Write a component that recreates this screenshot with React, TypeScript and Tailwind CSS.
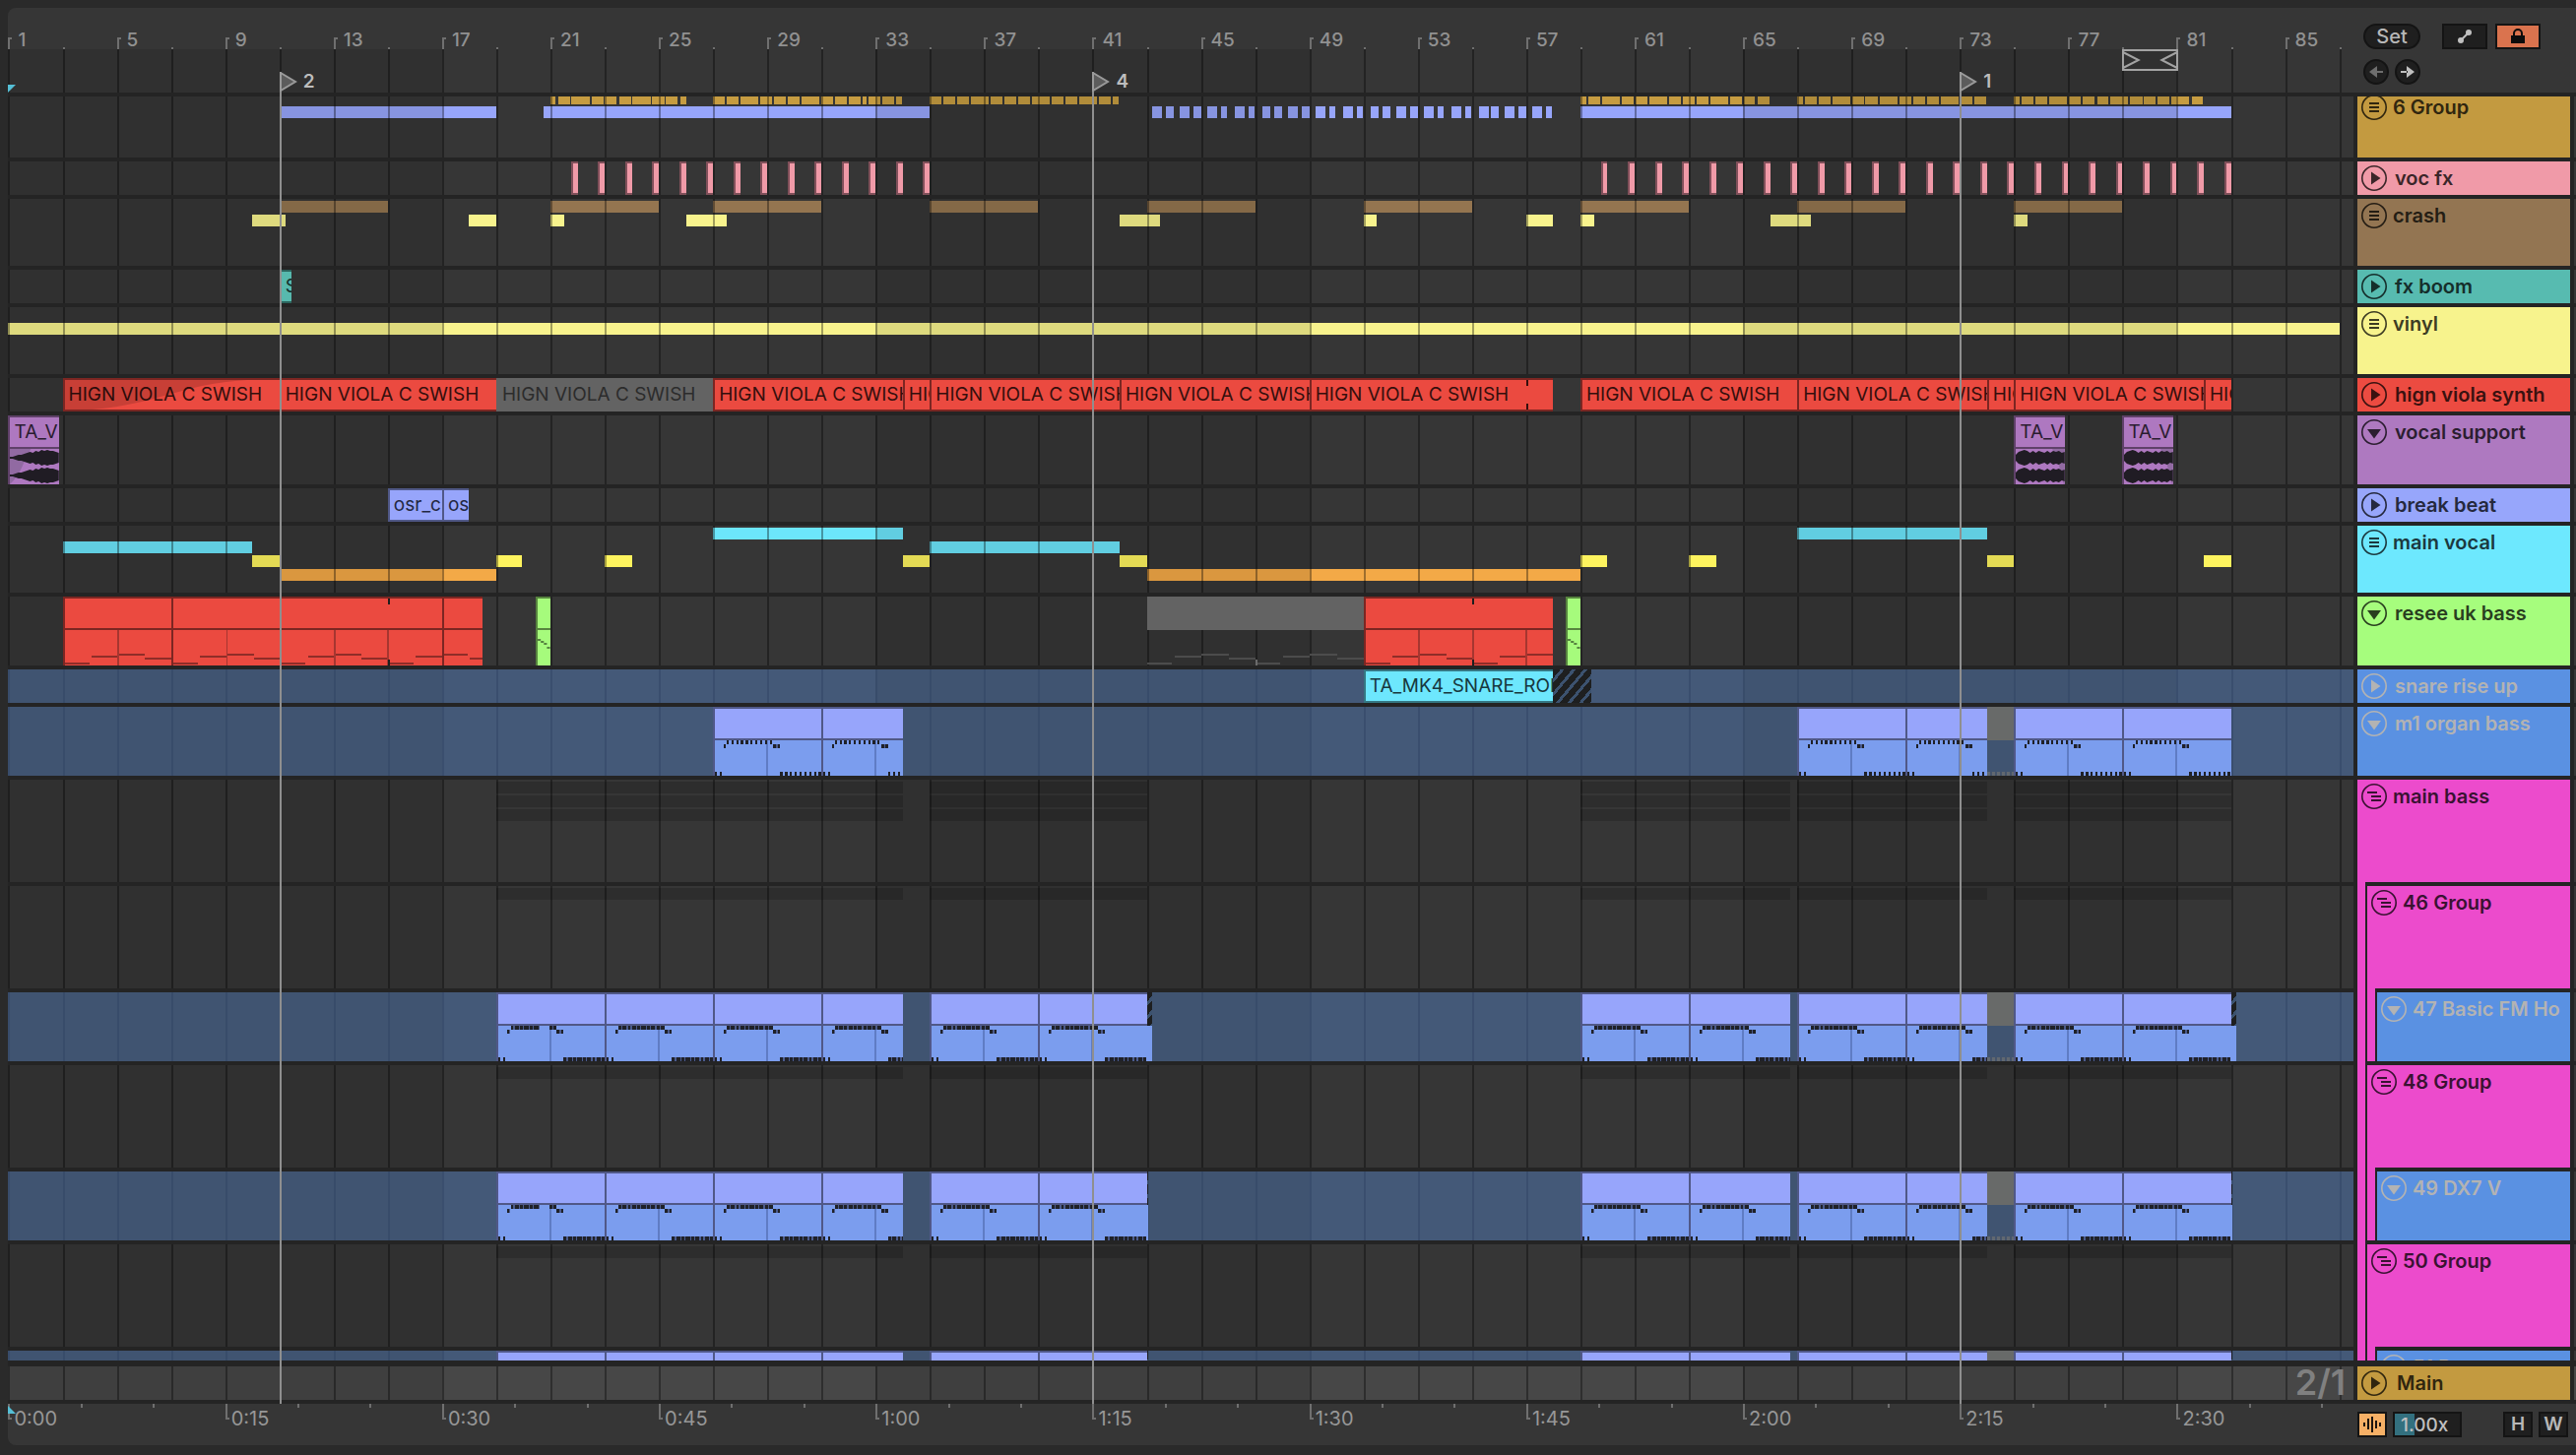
import type { ReactNode } from "react"

const TOTAL_BARS = 86.54
const LEAD_IN = 0.018

type Span = [start: number, end: number]

const left = (bar: number) => `${((bar - 1 + LEAD_IN) / TOTAL_BARS) * 100}%`
const width = (bars: number) => `${(bars / TOTAL_BARS) * 100}%`
const place = (start: number, end: number) => ({ left: left(start), width: width(end - start) })

function shift(offset: number, spans: Span[]): Span[] {
  return spans.map(([s, e]) => [s + offset, e + offset])
}

const gridBars = Array.from({ length: 44 }, (_, i) => 1 + i * 2)
const shadedBars: Span[] = [[1, 17], [33, 49], [65, 81]]

// ---------- lane background ----------

function Shade({ soft }: { soft?: boolean }) {
  return (
    <>
      {shadedBars.map(([s, e]) => (
        <div key={s} className={`absolute inset-y-0 ${soft ? "bg-black/5" : "bg-black/10"}`} style={place(s, e)} />
      ))}
    </>
  )
}

function Grid({ soft }: { soft?: boolean }) {
  return (
    <>
      {gridBars.map((bar) => (
        <div
          key={bar}
          className={`absolute inset-y-0 w-0.5 ${soft ? "bg-[#2f4464]/50" : "bg-black/35"}`}
          style={{ left: left(bar) }}
        />
      ))}
    </>
  )
}

// ---------- group overview strips ----------

const stripTop = ["top-0.5", "top-4", "top-[30px]", "top-11"]

function Strips({ row, color, spans }: { row: number; color: string; spans: Span[] }) {
  return (
    <>
      {spans.map(([s, e]) => (
        <div key={s} className={`absolute h-3 ${stripTop[row]} ${color}`} style={place(s, e)} />
      ))}
    </>
  )
}

const drums: Span[] = [
  ...shift(21, [[0, 0.2], [0.28, 0.72], [0.78, 1.45], [1.51, 1.95], [2.01, 2.45], [2.53, 2.97], [3.03, 3.7], [3.76, 4.2], [4.26, 4.7], [4.78, 5]]),
  ...shift(27, [[0, 0.44], [0.5, 0.94], [1, 1.67], [1.73, 2.17], [2.25, 2.69], [2.76, 3.2], [3.26, 3.92], [3.99, 4.43], [4.5, 4.93], [5, 5.45], [5.5, 5.66], [5.74, 6.18], [6.24, 6.68], [6.75, 6.97]]),
  ...shift(35, [[0, 0.42], [0.5, 0.94], [1, 1.44], [1.5, 2.17], [2.24, 2.68], [2.76, 3.2], [3.26, 3.7], [3.78, 4.43], [4.5, 4.93], [5, 5.45], [5.5, 6.16], [6.24, 6.68], [6.75, 6.97]]),
  ...shift(59, [[0, 0.21], [0.28, 0.73], [0.79, 1.44], [1.52, 1.96], [2.02, 2.46], [2.54, 3.19], [3.26, 3.7], [3.77, 4.22], [4.28, 4.72], [4.78, 5.45], [5.51, 5.95], [6.03, 6.45], [6.53, 6.97]]),
  ...shift(67, [[0, 0.21], [0.27, 0.73], [0.79, 1.23], [1.29, 1.96], [2.02, 2.46], [2.52, 2.96], [3.04, 3.69], [3.76, 4.2], [4.28, 4.71], [4.78, 5.22], [5.3, 5.95], [6.03, 6.45], [6.52, 6.97]]),
  ...shift(75, [[0, 0.22], [0.28, 0.72], [0.8, 1.24], [1.3, 1.96], [2.04, 2.47], [2.54, 2.98], [3.06, 3.48], [3.56, 4.21], [4.29, 4.73], [4.8, 5.23], [5.3, 5.74], [5.8, 6.47], [6.55, 6.97]]),
]

const chops = shift(43, [
  [0.21, 0.57], [0.71, 1], [1.22, 1.59], [1.73, 2.02],
  [2.24, 2.6], [2.75, 2.97], [3.26, 3.62], [3.77, 3.98],
  [4.27, 4.56], [4.71, 5], [5.22, 5.58], [5.73, 6.02],
  [6.23, 6.6], [6.74, 6.96], [7.25, 7.62], [7.76, 7.98],
  [8.27, 8.56], [8.7, 9], [9.21, 9.58], [9.72, 10.01],
  [10.23, 10.59], [10.74, 10.96], [11.25, 11.61], [11.76, 11.97],
  [12.26, 12.63], [12.7, 12.99], [13.21, 13.57], [13.72, 14.01],
  [14.22, 14.59], [14.73, 14.95],
])

const bassRegions: Span[] = [[19, 34], [35, 43], [59, 66.75], [67, 74], [75, 83]]

function Ghosts({ rows }: { rows: number[] }) {
  return (
    <>
      {rows.map((r) => (
        <Strips key={r} row={r} color="bg-black/15" spans={bassRegions} />
      ))}
    </>
  )
}

// ---------- clips ----------

const palette = {
  red: "bg-[#eb4a40] border-[#7c2622] text-[#350f0d]",
  pink: "bg-[#f09aa8] border-[#81505a] text-black",
  teal: "bg-[#57b9ae] border-[#2c655e] text-[#132e2b]",
  purple: "bg-[#ae78c0] border-[#5f4169] text-[#2a1c2f]",
  blue: "bg-[#97a5fb] border-[#505887] text-[#232842]",
  cyan: "bg-[#6de7fd] border-[#357783] text-[#17383e]",
  green: "bg-[#a6fb7c] border-[#57843f] text-black",
}

function Clip({ at, color, name }: { at: Span; color: keyof typeof palette; name?: string }) {
  return (
    <div
      className={`absolute inset-y-0 overflow-hidden whitespace-nowrap border-y-2 border-l-2 pl-1 text-[19px] leading-[30px] ${palette[color]}`}
      style={place(...at)}
    >
      {name}
    </div>
  )
}

function MutedClip({ at, name }: { at: Span; name?: string }) {
  return (
    <div
      className="absolute top-0 h-[34px] overflow-hidden whitespace-nowrap bg-[#636363] pl-1.5 text-[19px] leading-[34px] text-[#2c2c2c]"
      style={place(...at)}
    >
      {name}
    </div>
  )
}

function OpenClip({ at, color, body, name, children }: {
  at: Span
  color: keyof typeof palette
  body?: string
  name?: string
  children?: ReactNode
}) {
  return (
    <div
      className={`absolute inset-y-0 flex flex-col overflow-hidden border-l-2 border-t-2 ${palette[color]}`}
      style={place(...at)}
    >
      <div className="h-8 shrink-0 border-b-2 border-inherit pl-1 text-[19px] leading-[30px]">{name}</div>
      <div className={`h-9 shrink-0 ${body ?? ""}`}>{children}</div>
    </div>
  )
}

function Hatch({ at }: { at: Span }) {
  return (
    <div
      className="absolute top-0 h-[34px] bg-[repeating-linear-gradient(130deg,#1e1f20_0_6px,#3c526f_6px_9px)]"
      style={place(...at)}
    />
  )
}

const viola: Span[] = [[3, 11], [11, 19], [27, 34], [34, 35], [35, 42], [42, 49], [49, 58], [59, 67], [67, 74], [74, 75], [75, 82], [82, 83]]
const vocFx = [
  ...Array.from({ length: 14 }, (_, i) => 21.75 + i),
  ...Array.from({ length: 24 }, (_, i) => 59.75 + i),
]

const bassNoteY = [33, 26, 24, 28]

function BassNotes({ at: [start, end], color, lines }: { at: Span; color: string; lines?: string }) {
  const len = end - start
  const steps = Array.from({ length: Math.ceil(len) }, (_, i) => i)
  return (
    <svg className="block h-9 w-full" viewBox={`0 0 ${len} 36`} preserveAspectRatio="none" shapeRendering="crispEdges">
      {steps.map((i) => (
        <rect key={i} x={i} y={bassNoteY[(start + i - 3) % 4]} width={i % 4 === 0 ? 0.92 : 1} height="2" fill={color} />
      ))}
      {lines && steps.filter((i) => i > 0 && i % 2 === 0).map((i) => (
        <rect key={i} x={i - 0.04} y="0" width="0.07" height="36" fill={lines} />
      ))}
    </svg>
  )
}

function RiffRun({ from, to, y, dense }: { from: number; to: number; y: number; dense?: boolean }) {
  return (
    <>
      {dense && <line x1={from} x2={to} y1={y} y2={y} stroke="#4b5b8d" strokeWidth="4" />}
      <line x1={from} x2={to} y1={y} y2={y} stroke="#1f2128" strokeWidth="4" strokeDasharray={dense ? "0.1 0.05 0.16 0.05" : "0.08 0.1"} />
    </>
  )
}

function Riff({ len, dense, broken }: { len: number; dense?: boolean; broken?: boolean }) {
  return (
    <svg className="block h-9 w-full" viewBox={`0 0 ${len} 36`} preserveAspectRatio="none" shapeRendering="crispEdges">
      <rect x="1.94" y="0" width="0.07" height="36" fill="#5f7cc4" />
      {broken ? (
        <>
          <RiffRun from={0.47} to={1.55} y={2} dense={dense} />
          <RiffRun from={1.92} to={2.2} y={2} dense={dense} />
        </>
      ) : (
        <RiffRun from={0.44} to={2.2} y={2} dense={dense} />
      )}
      <RiffRun from={0.32} to={0.46} y={6} dense={dense} />
      <RiffRun from={2.2} to={2.44} y={6} dense />
      <RiffRun from={0} to={0.3} y={34} />
      <RiffRun from={2.46} to={4} y={34} dense={dense} />
    </svg>
  )
}

function RiffClips({ spans, dense, brokenAt }: { spans: Span[]; dense?: boolean; brokenAt?: number }) {
  return (
    <>
      {spans.map((at) => (
        <OpenClip key={at[0]} at={at} color="blue" body="bg-[#7b9dee]">
          <Riff len={at[1] - at[0]} dense={dense} broken={at[0] === brokenAt} />
        </OpenClip>
      ))}
    </>
  )
}

const organClips: Span[] = [[27, 31], [31, 34], [67, 71], [71, 74], [75, 79], [79, 83]]
const synthClips: Span[] = [
  [19, 23], [23, 27], [27, 31], [31, 34], [35, 39], [39, 43],
  [59, 63], [63, 66.75], [67, 71], [71, 74], [75, 79], [79, 83],
]

function GapClip() {
  return (
    <>
      <div className="absolute top-0 h-[34px] bg-[#686a69]" style={place(74, 75)} />
      <div className="absolute bottom-0 h-1 bg-[repeating-linear-gradient(90deg,#616870_0_3px,#45546b_3px_5px)]" style={place(74, 75)} />
    </>
  )
}

function SynthLane({ tail }: { tail: number }) {
  return (
    <>
      <RiffClips spans={synthClips} dense brokenAt={19} />
      <GapClip />
      {[43, 83].map((bar) => (
        <div key={bar}>
          <Hatch at={[bar, bar + tail]} />
          <div className="absolute bottom-0 h-9 bg-[#7b9dee]" style={place(bar, bar + tail)} />
        </div>
      ))}
    </>
  )
}

function Waveform({ fadeIn }: { fadeIn?: boolean }) {
  const amps = fadeIn
    ? [1, 1, 2, 3, 3, 4, 5, 6, 5, 7, 6, 8, 7, 8, 7, 7, 6, 5]
    : [3, 6, 7, 8, 7, 5, 7, 5, 7, 6, 5, 7, 5, 7, 6, 7, 5, 6]
  const shape = (mid: number) => {
    const top = amps.map((a, i) => `${i * 3},${mid - a}`)
    const bottom = amps.map((a, i) => `${i * 3},${mid + a}`).reverse()
    return [...top, ...bottom].join(" ")
  }
  return (
    <svg className="block h-9 w-full" viewBox="0 0 51 36" preserveAspectRatio="none">
      {fadeIn ? (
        <path d="M0 0 H22 C14 12 12 26 0 36 Z" fill="#916aa2" />
      ) : (
        <path d="M51 0 V36 H50 C46 20 44 10 38 0 Z" fill="#916aa2" />
      )}
      <polygon points={shape(9)} fill="#201c24" />
      <polygon points={shape(27)} fill="#201c24" />
    </svg>
  )
}

function Mark({ bar, className }: { bar: number; className: string }) {
  return <div className={`absolute w-0.5 ${className}`} style={{ left: left(bar) }} />
}

// ---------- track headers ----------

type Icon = "group" | "open-group" | "play" | "fold"

function TrackIcon({ icon }: { icon: Icon }) {
  return (
    <svg className="size-[26px]" viewBox="0 0 26 26" fill="none" stroke="currentColor">
      <circle cx="13" cy="13" r="12.2" strokeWidth="1.6" />
      {icon === "group" && <path d="M8 9h10M8 13h10M8 17h10" strokeWidth="2" />}
      {icon === "open-group" && <path d="M6 9h10M10 13h10M10 17h10" strokeWidth="1.8" />}
      {icon === "play" && <path d="M10 6.5 L19.5 13 L10 19.5Z" fill="currentColor" stroke="none" />}
      {icon === "fold" && <path d="M6 10 H20 L13 19.5Z" fill="currentColor" stroke="none" />}
    </svg>
  )
}

type Track = {
  name: string
  icon: Icon
  color: string
  height: string
  selected?: boolean
  rails?: string[]
  openBelow?: boolean
  strips?: ReactNode
  clips?: ReactNode
}

function TrackHeader({ track }: { track: Track }) {
  const wide = !track.rails && (track.icon === "play" || track.icon === "fold")
  return (
    <div className="flex w-[216px] shrink-0">
      {track.rails?.map((rail, i) => (
        <div key={i} className={`mr-0.5 w-2 shrink-0 bg-[#ec4bcc] ${rail}`} />
      ))}
      <div className="min-w-0 flex-1">
        <div className={`flex items-start overflow-hidden p-1 ${track.height} ${track.color}`}>
          <button type="button" aria-label={`Toggle ${track.name}`} className="shrink-0">
            <TrackIcon icon={track.icon} />
          </button>
          <span className={`whitespace-nowrap text-[20px] font-semibold leading-[26px] ${wide ? "ml-2" : "ml-1.5"}`}>
            {track.name}
          </span>
        </div>
        <div className={`h-1 w-2 ${track.openBelow ? "bg-[#ec4bcc]" : ""}`} />
      </div>
    </div>
  )
}

function TrackRow({ track }: { track: Track }) {
  return (
    <div className="flex shrink-0 gap-1">
      <div className={`relative min-w-0 flex-1 overflow-hidden ${track.height} ${track.selected ? "bg-[#445978]" : "bg-[#363636]"}`}>
        {track.strips}
        <Shade soft={track.selected} />
        <Grid soft={track.selected} />
        {track.clips}
      </div>
      <TrackHeader track={track} />
      <div className="mb-1 w-0.5 shrink-0 bg-[#363636]" />
    </div>
  )
}

const magenta = "bg-[#ec4bcc] text-[#3a1232]"
const selectedBlue = "bg-[#5a91e2] text-[#b3b3b3]"

const tracks: Track[] = [
  {
    name: "6 Group", icon: "group", color: "bg-[#c39a40] text-[#30260f]", height: "h-[68px]",
    strips: (
      <>
        <Strips row={0} color="bg-[#c69c41]" spans={drums} />
        <Strips row={1} color="bg-[#97a5fb]" spans={[[11, 19], [20.75, 35], ...chops, [59, 83]]} />
      </>
    ),
  },
  {
    name: "voc fx", icon: "play", color: "bg-[#f09aa8] text-[#3b2629]", height: "h-[34px]",
    clips: vocFx.map((bar) => <Clip key={bar} at={[bar, bar + 0.25]} color="pink" />),
  },
  {
    name: "crash", icon: "group", color: "bg-[#937552] text-[#241d14]", height: "h-[68px]",
    strips: (
      <>
        <Strips row={0} color="bg-[#947550]" spans={[11, 21, 27, 35, 43, 51, 59, 67, 75].map((b): Span => [b, b + 4])} />
        <Strips
          row={1}
          color="bg-[#f8f38d]"
          spans={[[10, 11.24], [18, 19], [21, 21.5], [26, 27.5], [42, 43.5], [51, 51.5], [57, 58], [59, 59.5], [66, 67.5], [75, 75.5]]}
        />
      </>
    ),
  },
  {
    name: "fx boom", icon: "play", color: "bg-[#57bbb0] text-[#152e2b]", height: "h-[34px]",
    clips: <Clip at={[11, 11.46]} color="teal" name="S" />,
  },
  {
    name: "vinyl", icon: "group", color: "bg-[#f7f38d] text-[#3d3c23]", height: "h-[68px]",
    strips: <Strips row={1} color="bg-[#f8f38d]" spans={[[1, 87]]} />,
  },
  {
    name: "hign viola synth", icon: "play", color: "bg-[#ec4b41] text-[#3a1210]", height: "h-[34px]",
    clips: (
      <>
        {viola.map((at) => <Clip key={at[0]} at={at} color="red" name="HIGN VIOLA C SWISH" />)}
        <svg className="absolute inset-y-0 h-[34px] py-0.5" style={place(3, 9.8)} viewBox="0 0 188 30" preserveAspectRatio="none">
          <path d="M2 0 H188 C120 4 100 24 30 30 H2Z" fill="#000" opacity="0.15" />
        </svg>
        <MutedClip at={[19, 27]} name="HIGN VIOLA C SWISH" />
        <Mark bar={57} className="bottom-0.5 h-1.5 bg-[#350f0d]" />
        <Mark bar={57} className="top-0.5 h-1.5 bg-[#350f0d]" />
      </>
    ),
  },
  {
    name: "vocal support", icon: "fold", color: "bg-[#ae79c0] text-[#2b1e30]", height: "h-[70px]",
    clips: (
      <>
        <OpenClip at={[1, 2.88]} color="purple" name="TA_V"><Waveform fadeIn /></OpenClip>
        <OpenClip at={[75, 76.88]} color="purple" name="TA_V"><Waveform /></OpenClip>
        <OpenClip at={[79, 80.88]} color="purple" name="TA_V"><Waveform /></OpenClip>
      </>
    ),
  },
  {
    name: "break beat", icon: "play", color: "bg-[#97a6fb] text-[#25293e]", height: "h-[34px]",
    clips: (
      <>
        <Clip at={[15, 17]} color="blue" name="osr_c" />
        <Clip at={[17, 18]} color="blue" name="os" />
      </>
    ),
  },
  {
    name: "main vocal", icon: "group", color: "bg-[#6de8fe] text-[#1b393f]", height: "h-[68px]",
    strips: (
      <>
        <Strips row={0} color="bg-[#6ce6fb]" spans={[[27, 34], [67, 74]]} />
        <Strips row={1} color="bg-[#6ce6fb]" spans={[[3, 10], [35, 42]]} />
        <Strips row={2} color="bg-[#fdf35e]" spans={[[10, 11], [19, 19.96], [23, 24], [34, 35], [42, 43], [59, 60], [63, 64], [74, 75], [82, 83]]} />
        <Strips row={3} color="bg-[#f3a947]" spans={[[11, 19], [43, 59]]} />
      </>
    ),
  },
  {
    name: "resee uk bass", icon: "fold", color: "bg-[#a6fd7d] text-[#293e1f]", height: "h-[70px]",
    clips: (
      <>
        {([[3, 7], [7, 17], [17, 18.5], [51, 58]] as Span[]).map((at) => (
          <OpenClip key={at[0]} at={at} color="red">
            <BassNotes at={at} color="#8f2d28" lines="#a63630" />
          </OpenClip>
        ))}
        <MutedClip at={[43, 51]} />
        <div className="absolute bottom-0 h-9" style={place(43, 51)}>
          <BassNotes at={[43, 51]} color="#4c4c4c" />
        </div>
        {([[20.47, 21], [58.47, 59]] as Span[]).map((at) => (
          <OpenClip key={at[0]} at={at} color="green">
            <svg className="block h-9 w-full" viewBox="0 0 12 36" preserveAspectRatio="none">
              <path d="M0 10h3M3 12h3M6 14h3M9 18h3" stroke="#578440" strokeWidth="2" />
            </svg>
          </OpenClip>
        ))}
        <Mark bar={15} className="top-0.5 h-1.5 bg-[#1e1e1e]" />
        <Mark bar={15} className="bottom-0 h-1.5 bg-[#1e1e1e]" />
        <Mark bar={47} className="bottom-0 h-1.5 bg-[#6b6b6b]" />
        <Mark bar={55} className="top-0.5 h-1.5 bg-[#1e1e1e]" />
        <Mark bar={55} className="bottom-0 h-1.5 bg-[#1e1e1e]" />
      </>
    ),
  },
  {
    name: "snare rise up", icon: "play", color: selectedBlue, height: "h-[34px]", selected: true,
    clips: (
      <>
        <Clip at={[51, 58]} color="cyan" name="TA_MK4_SNARE_ROLL" />
        <Hatch at={[58, 59.4]} />
      </>
    ),
  },
  {
    name: "m1 organ bass", icon: "fold", color: selectedBlue, height: "h-[70px]", selected: true,
    clips: (
      <>
        <RiffClips spans={organClips} />
        <GapClip />
      </>
    ),
  },
  { name: "main bass", icon: "open-group", color: magenta, height: "h-[104px]", openBelow: true, strips: <Ghosts rows={[0, 1, 2]} /> },
  { name: "46 Group", icon: "open-group", color: magenta, height: "h-[104px]", rails: [""], openBelow: true, strips: <Ghosts rows={[0]} /> },
  { name: "47 Basic FM Ho", icon: "fold", color: selectedBlue, height: "h-[70px]", selected: true, rails: ["", "mb-1"], clips: <SynthLane tail={0.2} /> },
  { name: "48 Group", icon: "open-group", color: magenta, height: "h-[104px]", rails: [""], openBelow: true, strips: <Ghosts rows={[0]} /> },
  { name: "49 DX7 V", icon: "fold", color: selectedBlue, height: "h-[70px]", selected: true, rails: ["", "mb-1"], clips: <SynthLane tail={0.07} /> },
  { name: "50 Group", icon: "open-group", color: magenta, height: "h-[104px]", rails: [""], openBelow: true, strips: <Ghosts rows={[0]} /> },
  { name: "51 Bass", icon: "fold", color: selectedBlue, height: "h-[70px]", selected: true, rails: ["", "mb-1"], clips: <SynthLane tail={0.07} /> },
]

// ---------- rulers and toolbar ----------

function BarRuler() {
  return (
    <div className="relative min-w-0 flex-1">
      <div className="relative h-[42px]">
        {gridBars.map((bar) =>
          bar % 4 === 1 ? (
            <div key={bar} className="absolute bottom-0 flex h-3" style={{ left: left(bar) }}>
              <div className="w-0.5 bg-[#6f6f6f]" />
              <div className="h-0.5 w-0.5 bg-[#6f6f6f]" />
              <span className="-mt-2 ml-1.5 text-[19px] font-medium leading-[21px] text-[#919191]">{bar}</span>
            </div>
          ) : (
            <div key={bar} className="absolute bottom-0 size-0.5 bg-[#6f6f6f]" style={{ left: left(bar) }} />
          ),
        )}
      </div>
      <div className="relative h-11">
        <Shade />
        <Grid />
        <svg className="absolute bottom-0 left-0 size-2" viewBox="0 0 8 8">
          <path d="M0 0 H8 L0 8Z" fill="#55bfd6" />
        </svg>
        <svg className="absolute top-0 h-[22px]" style={place(79, 81.07)} viewBox="0 0 58 22" preserveAspectRatio="none" fill="none" stroke="#a3a3a3" strokeWidth="2">
          <path d="M1 1 H57 V21 H1Z M1 3 L17 11 L1 19 M57 3 L41 11 L57 19" />
        </svg>
      </div>
    </div>
  )
}

const roundButton = "flex size-[26px] items-center justify-center rounded-full border-2 border-[#141414] bg-[#1f1f1f]"
const squareButton = "flex h-[26px] items-center justify-center border-2 border-[#141414]"

function Toolbar() {
  return (
    <div className="flex w-[226px] shrink-0 flex-col gap-2.5 pl-2.5 pt-4">
      <div className="flex">
        <button type="button" className="h-[26px] w-[58px] rounded-full border-2 border-[#141414] bg-[#1f1f1f] text-[20px] font-medium leading-[22px] text-[#b8b8b8]">
          Set
        </button>
        <button type="button" aria-label="Automation mode" className={`ml-[22px] w-[46px] bg-[#1f1f1f] ${squareButton}`}>
          <svg className="size-4" viewBox="0 0 16 16">
            <path d="M4 12 L12 4" stroke="#c0c0c0" strokeWidth="2" />
            <circle cx="4" cy="12" r="3" fill="#c0c0c0" />
            <circle cx="12" cy="4" r="3" fill="#c0c0c0" />
          </svg>
        </button>
        <button type="button" aria-label="Lock envelopes" className={`ml-2 w-[46px] bg-[#da734e] ${squareButton}`}>
          <svg className="h-4 w-[14px]" viewBox="0 0 14 16">
            <path d="M3 8 V5 a4 4 0 0 1 8 0 V8" fill="none" stroke="#0c0c0c" strokeWidth="2" />
            <rect y="7" width="14" height="8" fill="#0c0c0c" />
          </svg>
        </button>
      </div>
      <div className="flex gap-1.5">
        <button type="button" aria-label="Previous locator" className={roundButton}>
          <svg className="h-3.5 w-4 shrink-0" viewBox="0 0 16 14"><path d="M1 7 L9 1 V13Z M8 6h7v2H8Z" fill="#6e6e6e" /></svg>
        </button>
        <button type="button" aria-label="Next locator" className={roundButton}>
          <svg className="h-3.5 w-4 shrink-0" viewBox="0 0 16 14"><path d="M15 7 L7 1 V13Z M1 6h7v2H1Z" fill="#c0c0c0" /></svg>
        </button>
      </div>
    </div>
  )
}

function TimeRuler() {
  const ticks = Array.from({ length: 33 }, (_, i) => i * 5)
  return (
    <div className="relative min-w-0 flex-1">
      {ticks.map((sec) => {
        const style = { left: left(1 + (sec / 15) * 8) }
        if (sec % 15 !== 0) {
          return <div key={sec} className="absolute top-0 h-1 w-0.5 bg-[#6f6f6f]" style={style} />
        }
        const label = `${Math.floor(sec / 60)}:${String(sec % 60).padStart(2, "0")}`
        return (
          <div key={sec} className="absolute top-0 flex h-4 items-end" style={style}>
            <div className="h-4 w-0.5 bg-[#6f6f6f]" />
            <div className="h-0.5 w-0.5 bg-[#6f6f6f]" />
            <span className="-mb-[11px] ml-0.5 text-[20px] leading-[24px] text-[#979797]">{label}</span>
          </div>
        )
      })}
      <svg className="absolute left-0 top-0.5 size-2" viewBox="0 0 8 8">
        <path d="M0 0 L8 8 H0Z" fill="#55bfd6" />
      </svg>
    </div>
  )
}

function Footer() {
  return (
    <div className="flex h-[42px] shrink-0">
      <TimeRuler />
      <div className="ml-1 flex w-[222px] shrink-0 items-start pr-2 pt-2">
        <button type="button" aria-label="Optimize height" className={`w-[30px] bg-[#f6b066] ${squareButton}`}>
          <svg className="h-4 w-[18px]" viewBox="0 0 18 16" fill="none" stroke="#1c1510" strokeWidth="2">
            <path d="M1 6v4M5 2v11M9 0v16M13 4v8M17 6v4" />
          </svg>
        </button>
        <input
          aria-label="Zoom"
          defaultValue="1.00x"
          className="ml-1.5 h-[26px] w-[70px] border-2 border-[#141414] bg-[linear-gradient(90deg,#33707f_20px,#1f1f1f_20px)] pl-1.5 text-[19px] font-medium leading-[22px] text-[#c0c0c0]"
        />
        <div className="ml-auto flex gap-1.5">
          {["H", "W"].map((label) => (
            <button key={label} type="button" className={`w-[30px] bg-[#1f1f1f] text-[19px] font-semibold text-[#b8b8b8] ${squareButton}`}>
              {label}
            </button>
          ))}
        </div>
      </div>
    </div>
  )
}

const locators = [
  { bar: 11, name: "2" },
  { bar: 41, name: "4" },
  { bar: 73, name: "1" },
]

// Locator lines run over every lane, down to the time ruler.
function Locators() {
  return (
    <div className="pointer-events-none absolute bottom-[42px] left-0 right-[226px] top-[65px]">
      {locators.map((l) => (
        <div key={l.bar} className="absolute inset-y-0 flex border-l-2 border-[#8f8f8f]" style={{ left: left(l.bar) }}>
          <svg className="-ml-0.5 h-5 w-[18px]" viewBox="0 0 18 20">
            <path d="M1 1 L16 10 L1 19Z" fill="#5c5c5c" stroke="#9a9a9a" strokeWidth="2" />
          </svg>
          <span className="ml-1.5 text-[19px] font-semibold leading-5 text-[#bdbdbd]">{l.name}</span>
        </div>
      ))}
    </div>
  )
}

export default function App() {
  return (
    <div className="h-screen bg-[#2a2a2a] pb-2.5 pl-2 pt-2 font-['Inter',sans-serif]">
      <div className="relative flex h-full flex-col overflow-hidden rounded-l-lg bg-[#363636]">
        <div className="flex h-[86px] shrink-0">
          <BarRuler />
          <Toolbar />
        </div>

        <div className="min-h-0 flex-1 overflow-hidden border-t-4 border-[#242424] bg-[#242424]">
          <div className="-mt-1.5 flex flex-col">
            {tracks.map((track) => (
              <TrackRow key={track.name} track={track} />
            ))}
          </div>
        </div>

        <div className="flex shrink-0 gap-1 border-b-4 border-t-[6px] border-[#242424] bg-[#242424]">
          <div className="relative h-[34px] min-w-0 flex-1 bg-[#474747]">
            <Shade />
            <Grid />
            <span className="absolute right-2 top-0 text-[36px] font-semibold leading-8 text-[#808080]">2/1</span>
          </div>
          <div className="flex w-[216px] shrink-0 items-center bg-[#c39a40] p-1 text-[#30260f]">
            <button type="button" aria-label="Toggle Main"><TrackIcon icon="play" /></button>
            <span className="ml-2.5 text-[20px] font-semibold leading-[26px]">Main</span>
          </div>
          <div className="w-0.5 shrink-0 bg-[#474747]" />
        </div>

        <Footer />
        <Locators />
      </div>
    </div>
  )
}
